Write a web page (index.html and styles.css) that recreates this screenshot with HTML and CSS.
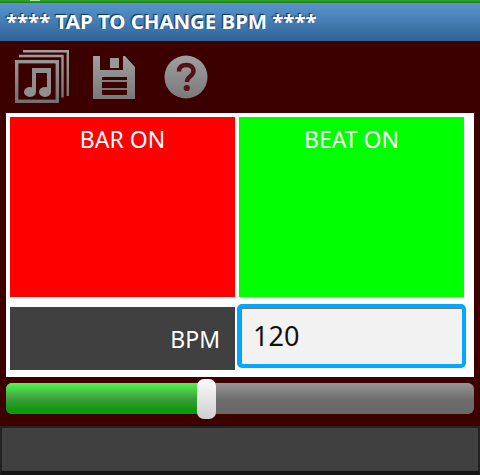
FILE: index.html
```html
<!DOCTYPE html>
<html lang="en">
<head>
<meta charset="utf-8">
<title>BPM</title>
<link rel="stylesheet" href="styles.css">
</head>
<body>
<div class="status"></div>
<header class="title">**** TAP TO CHANGE BPM ****</header>
<nav class="tools">
  <svg class="icon icon-music" width="56" height="56" viewBox="0 0 56 56">
    <defs><linearGradient id="g1" gradientUnits="userSpaceOnUse" x1="0" y1="0" x2="0" y2="54"><stop offset="0" stop-color="#a0a0a0"/><stop offset="1" stop-color="#707070"/></linearGradient></defs>
    <path d="M8 1.200H52.800V46" fill="none" stroke="url(#g1)" stroke-width="2.400"/>
    <path d="M4 6H47.500V47.500" fill="none" stroke="url(#g1)" stroke-width="2.400"/>
    <rect x="1.700" y="11.700" width="40.600" height="39.600" fill="#3c0000" stroke="url(#g1)" stroke-width="3.400"/>
    <g fill="#8f8f8f">
      <ellipse cx="15" cy="42" rx="6" ry="5"/>
      <ellipse cx="30" cy="42" rx="6" ry="5"/>
      <rect x="17" y="18" width="4" height="24"/>
      <rect x="32" y="18" width="4" height="24"/>
      <rect x="17" y="18" width="19" height="5"/>
    </g>
  </svg>
  <svg class="icon icon-save" width="43" height="45" viewBox="0 0 43 45">
    <path fill-rule="evenodd" d="M0 1H7V15H30V1H32L42 12V44H0ZM9 22V40H34V22Z" fill="url(#g1)"/>
    <rect x="17" y="3" width="9" height="10" fill="#989898"/>
    <rect x="9" y="25" width="25" height="2" fill="#808080"/>
    <rect x="9" y="33" width="25" height="2" fill="#787878"/>
  </svg>
  <svg class="icon icon-help" width="44" height="44" viewBox="0 0 44 44">
    <circle cx="22" cy="22" r="21.500" fill="url(#g1)"/>
    <path d="M15 16.500C15 12 18 10 22.500 10C27 10 29.500 12.500 29.500 16C29.500 19 27.500 20.500 25.500 22C23.800 23.300 23 24 23 27" fill="none" stroke="#55101a" stroke-width="4.400"/>
    <circle cx="22.800" cy="33" r="3.100" fill="#55101a"/>
  </svg>
</nav>
<main class="panel">
  <div class="pads">
    <div class="pad pad-bar">BAR ON</div>
    <div class="pad pad-beat">BEAT ON</div>
  </div>
  <div class="tempo">
    <div class="tempo-label">BPM</div>
    <div class="tempo-input">120</div>
  </div>
</main>
<div class="slider">
  <div class="slider-fill"></div>
  <div class="slider-thumb"></div>
</div>
<footer class="bottom"></footer>
</body>
</html>
```
FILE: styles.css
```css
* { box-sizing: border-box; }
html, body { margin: 0; padding: 0; }
body {
  width: 480px;
  height: 475px;
  overflow: hidden;
  background: #3c0000;
  font-family: "Noto Sans", "Open Sans", sans-serif;
  display: flex;
  flex-direction: column;
}
.status {
  position: relative;
  height: 3px;
  background: linear-gradient(#3aa52c, #127f12);
}
.status::after {
  content: "";
  position: absolute;
  left: 30px;
  top: 0;
  width: 10px;
  height: 1px;
  background: #a8e8a0;
}
.title {
  height: 38px;
  padding: 5px 0 0 6px;
  background: linear-gradient(#5b94ce, #2f6496);
  color: #fff;
  font-size: 20.4px;
  line-height: 26px;
  font-weight: 700;
  white-space: nowrap;
  text-shadow: -1px -1px 1px #0e3052;
}
.tools {
  height: 72px;
  display: flex;
  align-items: flex-start;
  padding: 9px 0 0 15px;
}
.icon { display: block; flex: none; }
.icon-save { margin: 5px 0 0 22px; }
.icon-help { margin: 5px 0 0 28px; }
.panel {
  width: 468px;
  height: 264px;
  margin: 0 0 0 6px;
  padding: 4px;
  background: #fff;
  display: flex;
  flex-direction: column;
}
.pads {
  display: flex;
  gap: 4px;
  height: 180px;
}
.pad {
  width: 225px;
  text-align: center;
  color: #fff;
  font-size: 23px;
  line-height: 30px;
  padding-top: 7px;
}
.pad-bar { background: #f00; }
.pad-beat { background: #0f0; }
.tempo {
  display: flex;
  align-items: flex-start;
  margin-top: 7px;
  gap: 2px;
}
.tempo-label {
  width: 225px;
  height: 63px;
  margin-top: 3px;
  background: #404040;
  color: #fff;
  font-size: 23px;
  line-height: 30px;
  text-align: right;
  padding: 17px 15px 0 0;
}
.tempo-input {
  width: 229px;
  height: 64px;
  border: 4px solid #00a8ff;
  border-radius: 5px;
  background: #f2f2f2;
  box-shadow: inset 0 1px 0 #777, inset 1px 0 0 #777;
  color: #111;
  font-size: 27px;
  line-height: 36px;
  padding: 10px 0 0 12px;
}
.slider {
  position: relative;
  display: flex;
  width: 468px;
  height: 31px;
  margin: 6px 0 0 6px;
  border-radius: 6px;
  background: linear-gradient(#969696, #6c6c6c 55%, #686868);
}
.slider-fill {
  width: 194px;
  border-radius: 6px 0 0 6px;
  background: linear-gradient(#50f850, #3f9f3f 50%, #0c9a0c 85%);
}
.slider-thumb {
  position: absolute;
  left: 191px;
  top: -4px;
  width: 19px;
  height: 40px;
  border-radius: 7px;
  background: linear-gradient(#fafafa, #cfcfcf);
}
.bottom {
  height: 49px;
  margin-top: 12px;
  background: #404040;
  border: 2px solid #222;
  border-bottom: 4px solid #161616;
}
```
